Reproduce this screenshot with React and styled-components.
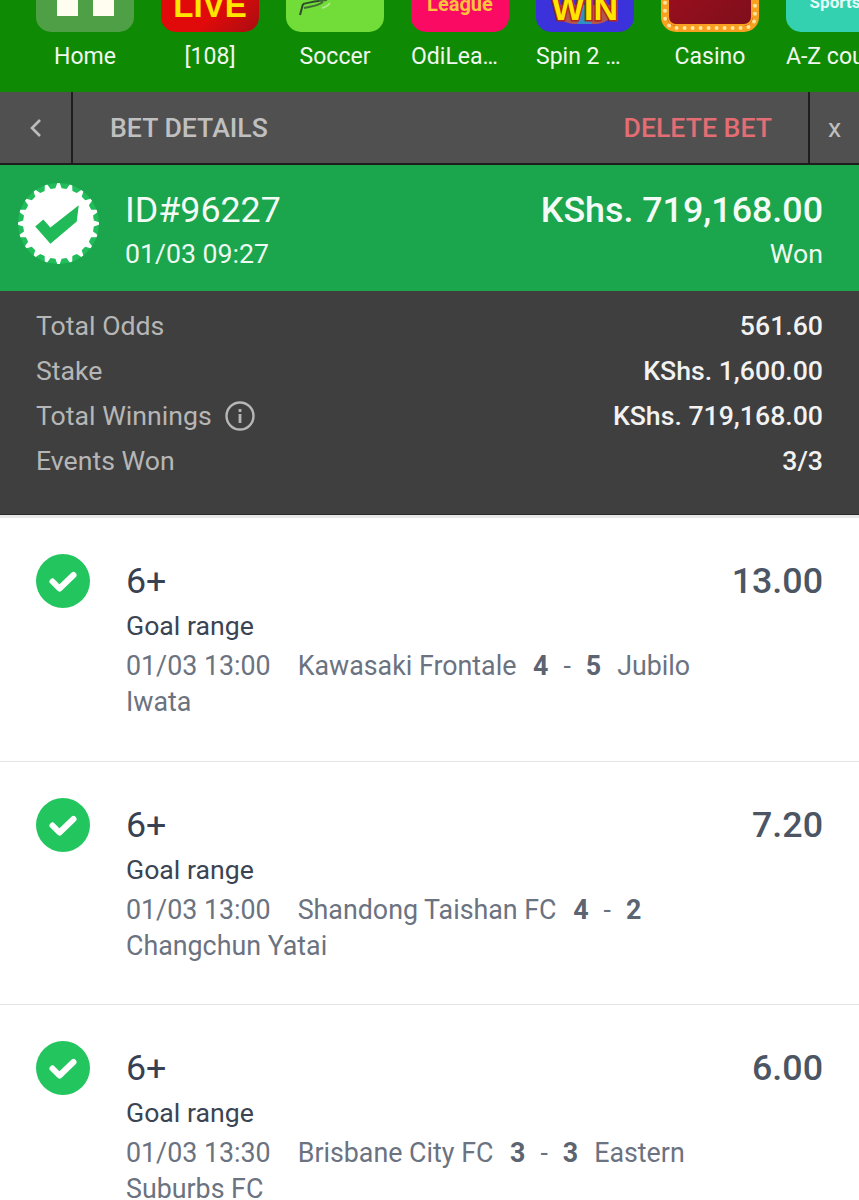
import React from "react"
import styled, { createGlobalStyle } from "styled-components"

const GlobalStyle = createGlobalStyle`
  html, body {
    margin: 0;
    padding: 0;
    background: #ffffff;
    font-family: Roboto, "Liberation Sans", sans-serif;
  }
`

const Page = styled.div`
  width: 859px;
  height: 1200px;
  overflow: hidden;
`

const GameNav = styled.nav`
  height: 92px;
  background: #0f8a05;
  display: flex;
  gap: 27px;
  padding-left: 36px;
  overflow: hidden;
`

const GameItem = styled.div`
  flex: 0 0 98px;
  min-width: 0;
  display: flex;
  flex-direction: column;
  align-items: center;
`

const TileClip = styled.div`
  width: 98px;
  height: 32px;
  display: flex;
  align-items: flex-end;
  overflow: hidden;
`

const Tile = styled.div`
  width: 98px;
  height: 60px;
  flex: none;
  border-radius: 15px;
  background: ${props => props.bg};
  display: flex;
  flex-direction: column;
  align-items: center;
  justify-content: flex-end;
  overflow: hidden;
  box-sizing: border-box;
  ${props => props.framed && `padding: 2px;`}
`

const HomeBars = styled.div`
  display: flex;
  gap: 15px;
  margin-bottom: 16px;

  span {
    width: 21px;
    height: 20px;
    background: #fffdf0;
  }
`

const LiveText = styled.div`
  font-family: "Liberation Sans", sans-serif;
  font-weight: 700;
  font-size: 33px;
  line-height: 20px;
  color: #ffe600;
  margin-bottom: 16px;
`

const LeagueText = styled.div`
  font-weight: 700;
  font-size: 20px;
  line-height: 18px;
  color: #ffc23d;
  margin-bottom: 19px;
`

const WinWheel = styled.div`
  position: relative;
  width: 60px;
  height: 19px;
  margin-bottom: 8px;
  background: linear-gradient(90deg, #b0564f 0 38%, #2f8fc4 38% 62%, #b0564f 62%);
  border-radius: 0 0 30px 30px;
`

const WinText = styled.div`
  position: absolute;
  left: 50%;
  bottom: 6px;
  transform: translateX(-50%);
  font-family: "Liberation Sans", sans-serif;
  font-weight: 700;
  font-size: 34px;
  line-height: 20px;
  color: #ffe600;
  -webkit-text-stroke: 3px #b3261e;
  paint-order: stroke fill;
`

const CasinoFace = styled.div`
  width: 100%;
  height: 100%;
  flex: none;
  box-sizing: border-box;
  border: 4px dotted #ffe59a;
  border-radius: 13px;
  background: linear-gradient(135deg, #9d0f1e, #7e0f1c) padding-box;
  box-shadow: inset 0 0 0 2px #f9a021;
`

const SportsText = styled.div`
  font-weight: 700;
  font-size: 17px;
  line-height: 18px;
  color: #e5fbf5;
  margin-bottom: 21px;
`

const GameLabel = styled.div`
  width: 98px;
  margin-top: 10px;
  text-align: ${props => (props.clipped ? "left" : "center")};
  font-size: 23px;
  line-height: 30px;
  color: #f1f8ee;
  white-space: nowrap;
`

const TopBar = styled.header`
  height: 71px;
  background: #505050;
  border-bottom: 2px solid #1e1e1e;
  display: flex;
  align-items: stretch;
`

const BackCell = styled.div`
  width: 71px;
  border-right: 2px solid #1e1e1e;
  display: flex;
  align-items: center;
  justify-content: center;
`

const BarTitle = styled.div`
  flex: 1;
  padding: 0 36px 0 37px;
  display: flex;
  align-items: center;
  justify-content: space-between;
`

const BarText = styled.span`
  font-size: 26.67px;
  font-weight: 500;
  color: ${props => (props.danger ? "#e36d73" : "#c0c0c0")};
`

const CloseCell = styled.div`
  width: 49px;
  border-left: 2px solid #1e1e1e;
  display: flex;
  align-items: center;
  justify-content: center;
  font-size: 26.67px;
  color: #c0c0c0;
`

const Hero = styled.section`
  height: 126px;
  background: #1ba54c;
  display: flex;
  align-items: center;
  padding: 2px 36px 0 18px;
  box-sizing: border-box;
  color: #ffffff;
`

const BadgeSlot = styled.div`
  display: flex;
  margin-bottom: 12px;
`

const HeroMain = styled.div`
  flex: 1;
  margin-left: 26px;
`

const HeroSide = styled.div`
  text-align: right;
`

const HeroLarge = styled.div`
  font-size: 35.8px;
  line-height: 44px;
  font-weight: ${props => (props.strong ? 500 : 400)};
  color: #f4fbf6;
`

const HeroSmall = styled.div`
  font-size: 26.67px;
  line-height: 34px;
  margin-top: 5px;
  color: #eef9f2;
`

const Summary = styled.section`
  height: 224px;
  box-sizing: border-box;
  background: #3f3f3f;
  padding: 12px 36px 0;
  border-bottom: 1px solid #2b2b2b;
`

const SummaryRow = styled.div`
  height: 45px;
  display: flex;
  align-items: center;
  justify-content: space-between;
`

const SummaryLabel = styled.span`
  display: flex;
  align-items: center;
  gap: 13px;
  font-size: 26.67px;
  color: #b6b6b6;
`

const SummaryValue = styled.span`
  font-size: 26.67px;
  font-weight: 500;
  color: #f2f2f2;
`

const Events = styled.section`
  border-top: 3px solid #e8e8e8;
`

const EventRow = styled.article`
  height: 243.5px;
  box-sizing: border-box;
  padding: 36px 36px 0;
  border-bottom: 1.5px solid #e2e4e8;
  display: flex;
  align-items: flex-start;
`

const EventBody = styled.div`
  flex: 1;
  margin-left: 36px;
  max-width: 600px;
`

const Pick = styled.div`
  font-size: 35.8px;
  line-height: 52px;
  padding-top: 1px;
  color: #374151;
`

const Market = styled.div`
  font-size: 26.67px;
  line-height: 36px;
  margin-top: 1px;
  color: #3b4453;
`

const Meta = styled.div`
  font-size: 26.8px;
  line-height: 36px;
  margin-top: 4px;
  color: #6b7280;
`

const MetaTime = styled.span`
  margin-right: 27px;
`

const ScoreLine = styled.span`
  display: inline-flex;
  gap: 15px;
  margin: 0 16px 0 10px;
  white-space: nowrap;

  b {
    font-weight: 700;
    color: #5b6470;
  }
`

const Odds = styled.div`
  margin-left: auto;
  padding-top: 1px;
  font-size: 35.8px;
  line-height: 52px;
  font-weight: 500;
  color: #4b5563;
`

const gearPoints = () => {
  const teeth = 20
  const step = (2 * Math.PI) / teeth
  const points = []
  const add = (r, a) => points.push(`${40 + r * Math.cos(a)},${40 + r * Math.sin(a)}`)
  for (let i = 0; i < teeth; i++) {
    const a = i * step
    add(35, a - step * 0.28)
    add(40, a - step * 0.1)
    add(40, a + step * 0.1)
    add(35, a + step * 0.28)
  }
  return points.join(" ")
}

const WonBadge = () => (
  <svg width="81" height="81" viewBox="0 0 80 80">
    <circle cx="40" cy="40" r="40" fill="#22bd5b" />
    <polygon points={gearPoints()} fill="#ffffff" />
    <path d="M17 43l8-7 7 8 28-22-2 16-26 22z" fill="#20bb58" />
  </svg>
)

const CheckCircle = () => (
  <svg width="54" height="54" viewBox="0 0 54 54" style={{ flex: "none" }}>
    <circle cx="27" cy="27" r="27" fill="#22c55e" />
    <path d="M16.5 27.5l7 7 14-13.5" fill="none" stroke="#ffffff" strokeWidth="6" strokeLinecap="round" strokeLinejoin="round" />
  </svg>
)

const InfoIcon = () => (
  <svg width="30" height="30" viewBox="0 0 30 30">
    <circle cx="15" cy="15" r="13.5" fill="none" stroke="#b6b6b6" strokeWidth="2.4" />
    <rect x="13.6" y="13" width="2.8" height="9" fill="#b6b6b6" />
    <rect x="13.6" y="8" width="2.8" height="3" fill="#b6b6b6" />
  </svg>
)

const games = [
  { label: "Home", bg: "#4f9f47", content: <HomeBars><span /><span /></HomeBars> },
  { label: "[108]", bg: "linear-gradient(135deg, #e00a0a 60%, #a80d12)", content: <LiveText>LIVE</LiveText> },
  {
    label: "Soccer",
    bg: "#72dc38",
    content: (
      <svg width="98" height="16" viewBox="0 0 98 16" style={{ marginBottom: 16 }}>
        <path d="M14 15l3-11 M17 4c6-1 10-3 16-3" fill="none" stroke="#2f4a2c" strokeWidth="2" />
        <path d="M18 8c6-2 12-1 19-6 M33 1l8-1" fill="none" stroke="#3f6d35" strokeWidth="2" />
        <path d="M36 8c4-1 6-2 8-5" fill="none" stroke="#a9e884" strokeWidth="2" />
      </svg>
    ),
  },
  { label: "OdiLea…", bg: "#fb0a63", clipped: true, content: <LeagueText>League</LeagueText> },
  { label: "Spin 2 …", bg: "#3b32dc", clipped: true, content: <WinWheel><WinText>WIN</WinText></WinWheel> },
  { label: "Casino", bg: "#f9a021", framed: true, content: <CasinoFace /> },
  { label: "A-Z cou", bg: "#33d1b0", clipped: true, content: <SportsText>Sports</SportsText> },
]

const events = [
  { odds: "13.00", time: "01/03 13:00", home: "Kawasaki Frontale", a: 4, b: 5, away: "Jubilo Iwata" },
  { odds: "7.20", time: "01/03 13:00", home: "Shandong Taishan FC", a: 4, b: 2, away: "Changchun Yatai" },
  { odds: "6.00", time: "01/03 13:30", home: "Brisbane City FC", a: 3, b: 3, away: "Eastern Suburbs FC" },
]

const summary = [
  { label: "Total Odds", value: "561.60" },
  { label: "Stake", value: "KShs. 1,600.00" },
  { label: "Total Winnings", value: "KShs. 719,168.00", info: true },
  { label: "Events Won", value: "3/3" },
]

const App = () => (
  <Page>
    <GlobalStyle />
    <GameNav>
      {games.map(game => (
        <GameItem key={game.label}>
          <TileClip>
            <Tile bg={game.bg} framed={game.framed}>{game.content}</Tile>
          </TileClip>
          <GameLabel clipped={game.clipped}>{game.label}</GameLabel>
        </GameItem>
      ))}
    </GameNav>
    <TopBar>
      <BackCell>
        <svg width="14" height="20" viewBox="0 0 14 20">
          <path d="M11 2L3 10l8 8" fill="none" stroke="#bdbdbd" strokeWidth="2.6" />
        </svg>
      </BackCell>
      <BarTitle>
        <BarText>BET DETAILS</BarText>
        <BarText danger>DELETE BET</BarText>
      </BarTitle>
      <CloseCell>x</CloseCell>
    </TopBar>
    <Hero>
      <BadgeSlot>
        <WonBadge />
      </BadgeSlot>
      <HeroMain>
        <HeroLarge>ID#96227</HeroLarge>
        <HeroSmall>01/03 09:27</HeroSmall>
      </HeroMain>
      <HeroSide>
        <HeroLarge strong>KShs. 719,168.00</HeroLarge>
        <HeroSmall>Won</HeroSmall>
      </HeroSide>
    </Hero>
    <Summary>
      {summary.map(row => (
        <SummaryRow key={row.label}>
          <SummaryLabel>
            {row.label}
            {row.info && <InfoIcon />}
          </SummaryLabel>
          <SummaryValue>{row.value}</SummaryValue>
        </SummaryRow>
      ))}
    </Summary>
    <Events>
      {events.map(event => (
        <EventRow key={event.home}>
          <CheckCircle />
          <EventBody>
            <Pick>6+</Pick>
            <Market>Goal range</Market>
            <Meta>
              <MetaTime>{event.time}</MetaTime>
              {event.home} <ScoreLine><b>{event.a}</b><span>-</span><b>{event.b}</b></ScoreLine>{event.away}
            </Meta>
          </EventBody>
          <Odds>{event.odds}</Odds>
        </EventRow>
      ))}
    </Events>
  </Page>
)

export default App
